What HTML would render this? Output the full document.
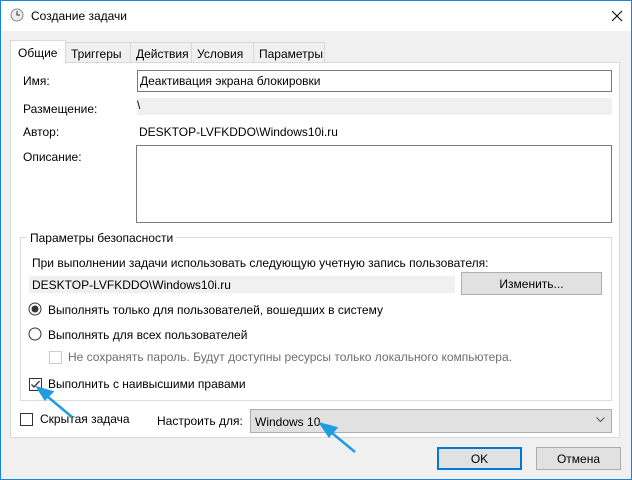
<!DOCTYPE html>
<html><head><meta charset="utf-8"><style>
*{box-sizing:border-box;margin:0;padding:0}
body{width:632px;height:480px;position:relative;overflow:hidden;background:#f0f0f0;font-family:"Liberation Sans","Noto Sans CJK SC",sans-serif;font-size:12px;color:#000}
.a{position:absolute;white-space:nowrap}
.t{line-height:14px}
</style></head><body>
<div class="a" style="left:0;top:0;width:632px;height:480px;border:1px solid #1883d7"></div>
<div class="a" style="left:1px;top:1px;width:630px;height:30px;background:#fff"></div>
<svg class="a" style="left:10px;top:8px" width="14" height="14"><circle cx="7" cy="7" r="6" fill="#eee" stroke="#888"/><path d="M7 3V7H10" stroke="#333" fill="none"/></svg>
<div class="a t" style="left:31px;top:9px">Создание задачи</div>
<svg class="a" style="left:611px;top:10px" width="12" height="12"><path d="M1 1L11 11M11 1L1 11" stroke="#000"/></svg>
<!-- tabs -->
<div class="a" style="left:10px;top:62px;width:610px;height:376px;background:#fff;border:1px solid #d9d9d9"></div>
<div class="a t" style="left:65px;top:42px;width:66px;height:21px;border:1px solid #d9d9d9;background:#f0f0f0;padding:4px 5px">Триггеры</div>
<div class="a t" style="left:130px;top:42px;width:62px;height:21px;border:1px solid #d9d9d9;background:#f0f0f0;padding:4px 5px">Действия</div>
<div class="a t" style="left:191px;top:42px;width:63px;height:21px;border:1px solid #d9d9d9;background:#f0f0f0;padding:4px 5px">Условия</div>
<div class="a t" style="left:253px;top:42px;width:72px;height:21px;border:1px solid #d9d9d9;background:#f0f0f0;padding:4px 5px">Параметры</div>
<div class="a t" style="left:10px;top:40px;width:56px;height:24px;border:1px solid #d9d9d9;border-bottom:none;background:#fff;padding:5px 7px">Общие</div>
<div class="a t" style="left:23px;top:74px">Имя:</div>
<div class="a t" style="left:137px;top:70px;width:475px;height:22px;border:1px solid #7a7a7a;padding:3px 2px;background:#fff">Деактивация экрана блокировки</div>
<div class="a t" style="left:23px;top:102px">Размещение:</div>
<div class="a t" style="left:137px;top:98px;width:475px;height:17px;background:#f0f0f0;padding:0 0">\</div>
<div class="a t" style="left:23px;top:125px">Автор:</div>
<div class="a t" style="left:139px;top:125px">DESKTOP-LVFKDDO\Windows10i.ru</div>
<div class="a t" style="left:23px;top:150px">Описание:</div>
<div class="a" style="left:136px;top:145px;width:476px;height:78px;border:1px solid #7a7a7a;background:#fff"></div>
<div class="a" style="left:20px;top:237px;width:592px;height:164px;border:1px solid #dcdcdc"></div>
<div class="a t" style="left:27px;top:231px;background:#fff;padding:0 3px">Параметры безопасности</div>
<div class="a t" style="left:32px;top:256px">При выполнении задачи использовать следующую учетную запись пользователя:</div>
<div class="a t" style="left:29px;top:276px;width:426px;height:17px;background:#f0f0f0;padding:2px 3px">DESKTOP-LVFKDDO\Windows10i.ru</div>
<div class="a t" style="left:461px;top:272px;width:141px;height:23px;background:#e1e1e1;border:1px solid #adadad;text-align:center;padding-top:4px">Изменить...</div>
<svg class="a" style="left:28px;top:302px" width="14" height="14"><circle cx="7" cy="7" r="6" fill="#fff" stroke="#333"/><circle cx="7" cy="7" r="3.5" fill="#333"/></svg>
<div class="a t" style="left:48px;top:303px">Выполнять только для пользователей, вошедших в систему</div>
<svg class="a" style="left:28px;top:327px" width="14" height="14"><circle cx="7" cy="7" r="6" fill="#fff" stroke="#333"/></svg>
<div class="a t" style="left:48px;top:328px">Выполнять для всех пользователей</div>
<div class="a" style="left:49px;top:351px;width:13px;height:13px;border:1px solid #ccc;background:#fff"></div>
<div class="a t" style="left:68px;top:350px;color:#6d6d6d">Не сохранять пароль. Будут доступны ресурсы только локального компьютера.</div>
<div class="a" style="left:29px;top:378px;width:13px;height:13px;border:1px solid #333;background:#fff"></div>
<svg class="a" style="left:30px;top:379px" width="11" height="11"><path d="M1.5 5.5L4 8L9.5 2" stroke="#333" stroke-width="1.3" fill="none"/></svg>
<div class="a t" style="left:48px;top:377px">Выполнить с наивысшими правами</div>
<div class="a" style="left:20px;top:413px;width:13px;height:13px;border:1px solid #333;background:#fff"></div>
<div class="a t" style="left:40px;top:412px">Скрытая задача</div>
<div class="a t" style="left:157px;top:414px">Настроить для:</div>
<div class="a t" style="left:250px;top:409px;width:362px;height:24px;background:#e1e1e1;border:1px solid #adadad;padding:5px 4px">Windows 10</div>
<svg class="a" style="left:596px;top:417px" width="9" height="6"><path d="M0.5 0.5L4.5 4.5L8.5 0.5" stroke="#555" fill="none"/></svg>
<div class="a t" style="left:437px;top:447px;width:85px;height:23px;background:#e1e1e1;border:2px solid #0078d7;text-align:center;padding-top:3px">OK</div>
<div class="a t" style="left:536px;top:447px;width:85px;height:23px;background:#e1e1e1;border:1px solid #adadad;text-align:center;padding-top:4px">Отмена</div>
<svg class="a" style="left:0;top:0" width="632" height="480"><g stroke="#1e9ee0" stroke-width="2.5" fill="#1e9ee0"><path d="M72 417L42 392"/><path d="M38 388L52 392L45 399Z"/><path d="M355 452L326 428"/><path d="M321 424L336 428L329 436Z"/></g></svg>
</body></html>
